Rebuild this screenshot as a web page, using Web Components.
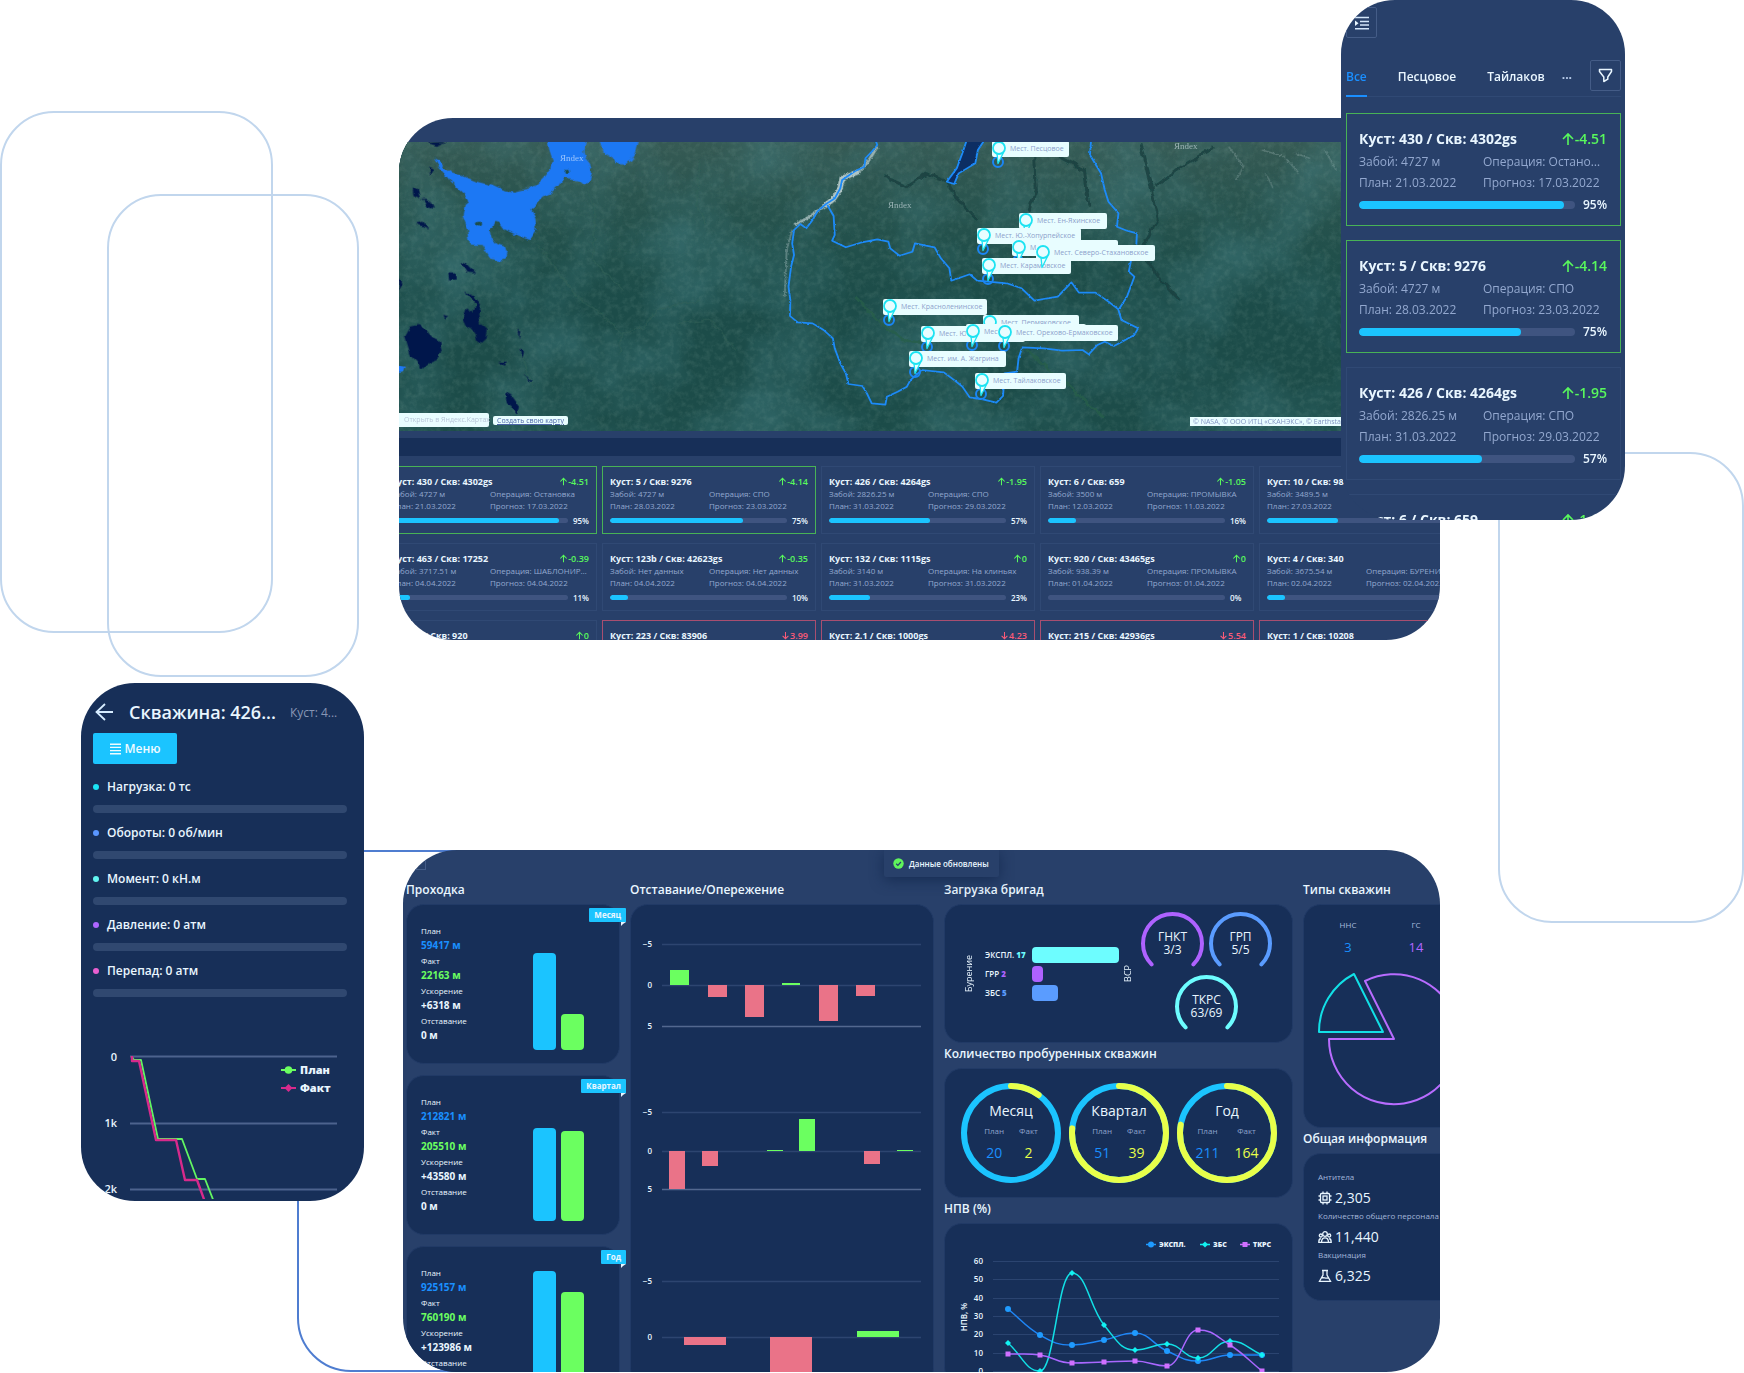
<!DOCTYPE html>
<html lang="ru">
<head>
<meta charset="utf-8">
<title>Мониторинг бурения</title>
<style>
  html { background: #fff; }
  body {
    margin: 0;
    font-family: "Open Sans", "Noto Sans", sans-serif;
    color: #e9f6ff;
    --panel: #28406a;
    --deep: #172f58;
    --line: #304974;
    --muted: #93a8cf;
    --cyan: #1bc4ff;
    --blue: #1a8fff;
    --green: #6bff60;
    --pink: #ea7388;
    --track: #3f5480;
  }
</style>
</head>
<body>
<app-collage></app-collage>

<script>
class Part extends HTMLElement {
  constructor() { super(); this.attachShadow({ mode: 'open' }); }
  connectedCallback() {
    this.shadowRoot.innerHTML = `<style>*{box-sizing:border-box}:host{display:block;box-sizing:border-box}${this.css()}</style>${this.html()}`;
  }
  css() { return ''; }
  html() { return ''; }
  a(name, fallback = '') { return this.getAttribute(name) ?? fallback; }
}
const define = (name, cls) => customElements.define(name, cls);

/* Well summary card, used in the wall grid and (size="large") in the phone list */
define('well-card', class extends Part {
  css() { return `
    :host { --t: 9px; --s: 8px; --th: 13px; --sh: 12px; --bh: 16px; --bar: 5px; --pct: 8px; --gap: 5px;
      height: 68px; padding: 8px 7px 0; border: 1px solid var(--line); overflow: hidden; }
    :host([size=large]) { --t: 14px; --s: 12px; --th: 24px; --sh: 21px; --bh: 23px; --bar: 8px; --pct: 12px; --gap: 8px;
      height: 113px; padding: 13px 13px 0 12px; }
    :host([state=good]) { border-color: #48b256; }
    :host([state=bad]) { border-color: #a84e70; }
    .head { display: flex; justify-content: space-between; font-size: var(--t); line-height: var(--th); font-weight: 700; white-space: nowrap; }
    .delta { display: flex; align-items: center; font-weight: 600; color: #58f85c; }
    .delta.down { color: #fb5a78; }
    .delta svg { width: 1em; height: 1em; }
    .facts { display: grid; grid-template-columns: 1fr 1fr; font-size: var(--s); line-height: var(--sh); color: var(--muted); }
    .facts span { overflow: hidden; text-overflow: ellipsis; white-space: nowrap; }
    .prog { display: flex; align-items: center; gap: var(--gap); height: var(--bh); font-size: var(--pct); font-weight: 600; }
    .track { flex: 1; height: var(--bar); border-radius: var(--bar); background: var(--track); overflow: hidden; }
    .fill { height: 100%; border-radius: var(--bar); background: var(--cyan); }
    .pct { min-width: 2em; white-space: nowrap; }`; }
  html() {
    const down = this.a('state') === 'bad', p = this.a('pct', '0');
    return `<div class="head"><span>${this.a('name')}</span><span class="delta ${down ? 'down' : ''}">
      <svg viewBox="0 0 14 14" fill="none" stroke="currentColor" stroke-width="1.6"><path d="${down ? 'M7 1.5V12M2.5 7.5 7 12l4.5-4.5' : 'M7 13V2.5M2 7l5-5 5 5'}"/></svg>${this.a('delta')}</span></div>
      <div class="facts"><span>Забой: ${this.a('depth')}</span><span>Операция: ${this.a('op')}</span>
      <span>План: ${this.a('plan')}</span><span>Прогноз: ${this.a('eta')}</span></div>
      <div class="prog"><div class="track"><div class="fill" style="width:${p}%"></div></div><span class="pct">${p}%</span></div>`;
  }
});

const wells = [
  ['Куст: 430 / Скв: 4302gs','-4.51','4727 м','Остановка','21.03.2022','17.03.2022',95,'good'],
  ['Куст: 5 / Скв: 9276','-4.14','4727 м','СПО','28.03.2022','23.03.2022',75,'good'],
  ['Куст: 426 / Скв: 4264gs','-1.95','2826.25 м','СПО','31.03.2022','29.03.2022',57,''],
  ['Куст: 6 / Скв: 659','-1.05','3500 м','ПРОМЫВКА','12.03.2022','11.03.2022',16,''],
  ['Куст: 10 / Скв: 981','-0.5','3489.5 м','СПО','27.03.2022','27.03.2022',40,''],
  ['Куст: 463 / Скв: 17252','-0.39','3717.51 м','ШАБЛОНИРОВАНИЕ','04.04.2022','04.04.2022',11,''],
  ['Куст: 123b / Скв: 42623gs','-0.35','Нет данных','Нет данных','04.04.2022','04.04.2022',10,''],
  ['Куст: 132 / Скв: 1115gs','0','3140 м','На клиньях','31.03.2022','31.03.2022',23,''],
  ['Куст: 920 / Скв: 43465gs','0','938.39 м','ПРОМЫВКА','01.04.2022','01.04.2022',0,''],
  ['Куст: 4 / Скв: 340','0','3675.54 м','БУРЕНИЕ','02.04.2022','02.04.2022',10,''],
  ['Куст: 6 / Скв: 920','0','','','','',0,''],
  ['Куст: 223 / Скв: 83906','3.99','','','','',0,'bad'],
  ['Куст: 2.1 / Скв: 1000gs','4.23','','','','',0,'bad'],
  ['Куст: 215 / Скв: 42936gs','5.54','','','','',0,'bad'],
  ['Куст: 1 / Скв: 10208','6','','','','',0,'bad']
];
const card = (w, size = '') => `<well-card ${size} name="${w[0]}" delta="${w[1]}" depth="${w[2]}" op="${w[3]}" plan="${w[4]}" eta="${w[5]}" pct="${w[6]}" state="${w[7]}"></well-card>`;

/* Pin with its label */
define('map-pin', class extends Part {
  css() { return `
    :host { position: absolute; height: 16px; border-radius: 2px; background: #e8fdff; color: #8c9fcb; font-size: 7px; line-height: 16px; padding-left: 18px; white-space: nowrap; }
    svg { position: absolute; left: 0; top: 0; width: 15px; height: 32px; overflow: visible; }`; }
  html() { return `<svg viewBox="0 0 15 32" fill="none"><path d="M5 12 6 22.500 11.500 11.500z" fill="#e8fdff" stroke="#1de3f2" stroke-width="1.300" stroke-linejoin="round"/>
    <circle cx="7" cy="7" r="6" fill="#e8fdff" stroke="#1de3f2" stroke-width="1.800"/></svg>${this.a('label')}`; }
});

define('field-map', class extends Part {
  css() { return `
    :host { position: relative; height: 289px; overflow: hidden; background: #1d4e4b; }
    .land { display: block; width: 100%; height: 100%; }
    .note { position: absolute; background: #e8fdff; color: #8396c2; font-size: 7px; white-space: nowrap; }
    .open { left: 0; bottom: 4px; width: 90px; line-height: 14px; padding-left: 5px; border-radius: 0 2px 2px 0; color: #b8c6d8; text-decoration: none; }
    .make { left: 94px; bottom: 6px; line-height: 9px; padding: 0 4px; border-radius: 2px; color: #4d66a8; }
    .copy { right: 94px; bottom: 5px; line-height: 9px; padding-left: 3px; width: 156px; overflow: hidden; }`; }
  html() {
    const pins = [
      [618,115,808,'Мест. Песцовое'],[692,330,910,'Мест. Ен-Яхинское'],[578,374,840,'Мест. Ю.-Хопурпейское'],
      [674,412,942,'Мест.'],[592,466,813,'Мест. Карамовское'],[738,425,1042,'Мест. Северо-Стахановское'],
      [324,588,587,'Мест. Красноленинское'],[594,636,836,'Мест. Пермяковское'],[428,670,690,'Мест. Ю.'],
      [549,662,855,'Мест.'],[634,667,942,'Мест. Орехово-Ермаковское'],
      [396,745,638,'Мест. им. А. Жагрина'],[572,809,800,'Мест. Тайлаковское']
    ].map(([x, y, r, t]) => {
      const l = Math.round(371 + x / 2.7034) - 7;
      return { x: l + 6, y: Math.round(y / 3 - 32) + 14, html: `<map-pin label="${t}" style="left:${l}px;top:${Math.round(y / 3 - 32) - 7}px;width:${Math.round(371 + r / 2.7034) - l}px"></map-pin>` };
    });
    return `<svg class="land" viewBox="0 0 1041 289" preserveAspectRatio="xMinYMin slice">
    <defs>
      <filter id="grain" x="0" y="0" width="100%" height="100%"><feTurbulence type="fractalNoise" baseFrequency=".16" numOctaves="5" seed="8"/><feColorMatrix values="0 0 0 0 .26  0 0 0 0 .42  0 0 0 0 .36  1.600 0 0 0 -.66"/></filter>
      <filter id="shade" x="0" y="0" width="100%" height="100%"><feTurbulence type="fractalNoise" baseFrequency=".012" numOctaves="5" seed="3"/><feColorMatrix values="0 0 0 0 .06  0 0 0 0 .22  0 0 0 0 .24  1.600 0 0 0 -.6"/></filter>
      <filter id="rough" x="-5%" y="-5%" width="110%" height="110%"><feTurbulence type="fractalNoise" baseFrequency=".12" numOctaves="2" seed="5"/><feDisplacementMap in="SourceGraphic" scale="6" xChannelSelector="R" yChannelSelector="G"/></filter>
      <filter id="soft" x="-20%" y="-20%" width="140%" height="140%"><feTurbulence type="fractalNoise" baseFrequency=".2" numOctaves="2" seed="2"/><feDisplacementMap in="SourceGraphic" scale="9" xChannelSelector="R" yChannelSelector="G"/><feGaussianBlur stdDeviation=".8"/></filter>
      <linearGradient id="north" x1="0" y1="0" x2="0" y2="1"><stop offset="0" stop-color="#3f5f58" stop-opacity=".75"/><stop offset=".55" stop-color="#2c5a50" stop-opacity="0"/></linearGradient>
    </defs>
    <rect width="1041" height="289" fill="#1c4c49"/>
    <rect width="1041" height="289" fill="url(#north)"/>
    <rect width="1041" height="289" filter="url(#shade)" opacity=".6" style="color-interpolation-filters:sRGB"/>
    <rect width="1041" height="289" filter="url(#grain)" opacity=".22"/>
    <g filter="url(#rough)">
    <g transform="translate(371 -32) scale(.3699 .33333)" fill="none" stroke="#17403f" stroke-width="8" opacity=".8">
      <path d="M310 200 370 230 420 190 480 215 500 260 560 330M715 130 720 240 700 300M780 140 850 180 862 290M1000 100 1030 230 1050 330 1000 420 1050 500 1110 570M1200 110 1100 180 1040 230"/>
      <path d="M690 720 780 800 900 920" stroke="#28604c"/><path d="M230 560 290 630 360 690 420 700" stroke="#28604c"/>
    </g>
    <g transform="translate(-9 -32) scale(.33333)">
      <path fill="none" stroke="#35645a" stroke-width="4" opacity=".6" d="M590 240 615 300 610 450 700 540M440 400 560 560 620 600 695 670 760 650 800 600 930 570M695 670 690 730M930 150 920 290 950 340M860 640 960 630 1040 720M390 720 430 830"/>
      <path fill="#1f78f4" d="M132 142 148 150 160 170 185 188 215 196 260 215 305 226 345 244 375 248 410 240 440 225 465 200 485 172 488 150 478 120 470 80H590L580 125 585 140 600 158 606 190 600 208 584 226 568 212 520 205 505 228 480 250 455 262 435 285 424 300 436 325 440 360 420 390 385 378 345 358 330 338 312 336 308 352 298 358 304 385 318 402 345 410 350 425 344 448 330 453 300 445 275 405 240 404 234 360 218 318 224 285 235 275 222 250 180 212 150 175zM630 80H750L738 125 725 150 700 164 678 162 664 140 640 125zM20 765 44 770 40 785 20 785z"/>
      <path fill="#00184b" d="M62 650 85 645 108 660 125 680 150 695 155 720 145 745 110 765 95 780 82 755 62 735 45 680zM222 545 250 555 270 580 265 610 270 640 293 660 290 685 270 704 260 690 255 665 228 650 218 630 230 598 250 610 258 580zM210 455 230 462 256 490 232 488zM175 490 195 490 198 508 178 512zM68 232 84 240 90 265 70 255zM98 265 120 272 132 296 114 292zM383 660 391 665 386 685zM390 715 402 725 398 743zM345 845 365 857 390 890 384 912 350 882zM400 790 426 814 420 815zM76 340 100 335 115 355zM115 170 130 176 120 195zM27 500 40 520 27 540zM160 615 174 618 165 626zM325 755 350 755 345 768zM110 98 170 96 140 108z"/>
      <ellipse cx="267" cy="342" rx="9" ry="7" fill="#1d4e4b"/><circle cx="533" cy="183" r="7" fill="#1d4e4b"/>
    </g></g>
    <g transform="translate(371 -32) scale(.3699 .33333)">
      <g filter="url(#soft)" fill="none" stroke="#dbe8ea">
        <path stroke-width="15" opacity=".75" d="M240 185 195 205 188 240 170 268 145 290"/><path stroke-width="8" opacity=".6" d="M290 110 262 160 240 185M145 290 100 325 65 345"/><path stroke-width="5" opacity=".3" d="M60 360 45 420 40 560"/>
        <path stroke-width="4" opacity=".22" d="M1240 110 1280 170 1260 210M1330 120 1390 140 1430 190M1420 130 1460 145M1340 190 1360 235M1500 120 1530 180"/>
      </g>
      <g filter="url(#rough)" fill="none" stroke="#1d8af8" stroke-width="5" stroke-linejoin="round">
        <path fill="#0b2e63" d="M532 90 520 130 505 175 478 215 498 222 510 190 555 160 562 120 580 90"/>
        <path d="M285 90 290 105 275 125 258 145 255 170 232 182 195 210 190 235 175 265 150 283 128 305 115 330 98 355 82 342 65 360 60 400 65 435 57 470 50 530 55 570 54 618 75 637 115 640 145 660 170 685 175 715 190 760 205 790 212 822 250 828 262 850 275 880 312 884 316 860 345 845 370 830 380 810 400 790 410 780 470 787 500 812 520 830 540 862 575 868 612 878 630 858 634 790 668 785 672 745 682 712 740 715 790 722 845 720 862 733 885 705 905 695 930 708 985 675 995 655 950 630 942 600 965 560 985 500 970 485 978 440 990 410 992 370 965 362 938 350 942 310 915 275 905 240 895 190 865 135 868 90"/>
        <path d="M155 285 172 318 175 375 168 392 205 412 245 398 290 388 320 395 325 415 350 437 385 425 392 400 445 412 462 445 485 475 490 512 540 493 560 512 640 520 680 535 715 572 778 560 815 517 835 548 880 548 915 575 942 598"/>
      </g>
    </g>
    <g fill="none" stroke="#1a86f5" stroke-width="2">${pins.map(p => `<circle cx="${p.x}" cy="${p.y}" r="5"/>`).join('')}</g>
    <g font-family="Liberation Serif, serif" font-size="9" fill="#b5c9cc" opacity=".8"><text x="161" y="19" fill="#bcd8ff">Яndex</text><text x="489" y="66">Яndex</text><text x="775" y="7">Яndex</text></g>
    </svg>${pins.map(p => p.html).join('')}
    <a class="note open" href="#open">Открыть в Яндекс.Картах</a><a class="note make" href="#make">Создать свою карту</a>
    <span class="note copy">© NASA, © ООО ИТЦ «СКАНЭКС», © Earthstar Geographics</span>`;
  }
});

define('map-panel', class extends Part {
  css() { return `
    :host { background: var(--panel); border-radius: 54px; overflow: hidden; padding-top: 24px; }
    .band { height: 18px; margin: 7px 0 10px; background: var(--deep); }
    .wall { display: grid; grid-template-columns: repeat(5, 214px); gap: 9px 5px; margin-left: -16px; }`; }
  html() { return `<field-map></field-map><div class="band"></div><div class="wall">${wells.map(w => card(w)).join('')}</div>`; }
});

define('list-panel', class extends Part {
  css() { return `
    :host { background: var(--panel); border-radius: 54px; overflow: hidden; padding: 7px 4px 0 5px; }
    button { font: inherit; color: inherit; background: none; border: 0; padding: 0; }
    .sq { width: 31px; height: 31px; border: 1px solid #445c87; border-radius: 2px; display: grid; place-items: center; }
    .bar { display: flex; align-items: center; margin-top: 22px; height: 37px; border-bottom: 1px solid #304974; margin-bottom: 16px; }
    .tab { font-size: 12px; font-weight: 600; line-height: 34px; height: 37px; margin-right: 31px; border-bottom: 2px solid transparent; }
    .tab.on { color: var(--blue); border-color: var(--blue); }
    .more { font-size: 12px; font-weight: 700; color: #b9cdeb; margin-left: -14px; line-height: 34px; height: 37px; }
    .bar .sq { margin: 0 0 6px auto; }
    .list { display: grid; gap: 14px; }`; }
  html() { return `
    <button class="sq" aria-label="Развернуть меню"><svg width="15" height="14" viewBox="0 0 15 14" fill="none" stroke="#d3e5fa" stroke-width="1.500"><path d="M1 1.500h14M6 5.500h9M6 9h9M1 12.700h14"/><path d="M1 4.500v5.500l3.500-2.800z" fill="#e9f6ff" stroke="none"/></svg></button>
    <div class="bar" role="tablist"><button class="tab on" role="tab" aria-selected="true">Все</button><button class="tab" role="tab">Песцовое</button><button class="tab" role="tab">Тайлаков</button><button class="more" aria-label="Ещё">···</button>
    <button class="sq" aria-label="Фильтр"><svg width="15" height="15" viewBox="0 0 15 15" fill="none" stroke="#e9f6ff" stroke-width="1.500" stroke-linejoin="round"><path d="M1.500 1.500h12v2L9.800 9v2.200L5.800 13.500V9L1.500 3.500z"/></svg></button></div>
    <div class="list">${wells.slice(0, 4).map(w => card(w, 'size="large"')).join('')}</div>`; }
});

define('well-gauge', class extends Part {
  css() { return `
    :host { height: 46px; }
    .l { display: flex; align-items: center; gap: 8px; font-size: 12px; font-weight: 600; line-height: 20px; }
    i { width: 6px; height: 6px; border-radius: 50%; background: var(--c); }
    .t { height: 8px; border-radius: 4px; background: #304870; margin-top: 8px; }`; }
  html() { return `<div class="l"><i></i>${this.a('label')}</div><div class="t"></div>`; }
});

define('well-panel', class extends Part {
  css() { return `
    :host { background: var(--deep); border-radius: 54px; overflow: hidden; padding: 14px 17px 0 12px; }
    header { display: flex; align-items: center; height: 30px; white-space: nowrap; }
    .back { background: none; border: 0; padding: 0 0 0 2px; line-height: 0; }
    h2 { margin: 0 0 0 16px; font-size: 18px; font-weight: 600; }
    .sub { margin-left: 14px; font-size: 12px; color: #8796b5; }
    .menu { display: flex; align-items: center; justify-content: center; gap: 4px; width: 84px; height: 31px; margin: 6px 0 13px; border: 0; border-radius: 2px; background: var(--cyan); color: #effbff; font: 600 12px "Open Sans", "Noto Sans", sans-serif; }
    svg { display: block; }
    .plot { margin: 32px 0 0 -12px; }`; }
  html() { return `
    <header><button class="back" aria-label="Назад"><svg width="18" height="18" viewBox="0 0 18 18" fill="none" stroke="#d6ecff" stroke-width="1.800"><path d="M18 9H1.500M10 1 1.500 9l8.500 8"/></svg></button><h2>Скважина: 426...</h2><span class="sub">Куст: 4...</span></header>
    <button class="menu"><svg width="11" height="12" viewBox="0 0 11 12" stroke="#effbff" stroke-width="1.400"><path d="M0 1.200h11M0 4.400h11M0 7.600h11M0 10.800h11"/></svg>Меню</button>
    ${[['Нагрузка: 0 тс','#1be3f5'],['Обороты: 0 об/мин','#5a96ff'],['Момент: 0 кН.м','#62f6f2'],['Давление: 0 атм','#ad66ff'],['Перепад: 0 атм','#e85fd0']].map(([t, c]) => `<well-gauge label="${t}" style="--c:${c}"></well-gauge>`).join('')}
    <svg class="plot" width="283" height="160" viewBox="0 0 283 160" fill="none" stroke-linejoin="round">
      <path d="M49 17.500h207M49 84.500h207M49 150.500h207" stroke="#4d638d" stroke-width="2"/>
      <path d="M51 18 53 21H60L77 100H101L116 140H124L133 163" stroke="#62f562" stroke-width="1.800"/>
      <path d="M51 17V22H58L75 101H95L104 141H116L124 163" stroke="#d72a8c" stroke-width="2.400"/>
      <g font-size="11" font-weight="600" fill="#e9f6ff" text-anchor="end"><text x="36" y="22">0</text><text x="36" y="88">1k</text><text x="36" y="154">2k</text></g>
      <path d="M200 31h15" stroke="#6bff60" stroke-width="2"/><circle cx="207.500" cy="31" r="3.800" fill="#6bff60"/>
      <path d="M200 49h15" stroke="#d72a8c" stroke-width="2"/><path d="m207.500 45 4 4-4 4-4-4z" fill="#d72a8c"/>
      <g font-size="11" font-weight="800" fill="#e9f6ff"><text x="219" y="35">План</text><text x="219" y="53">Факт</text></g>
    </svg>`; }
});

/* Titled dashboard section with slotted card(s) */
define('dash-section', class extends Part {
  css() { return `h3 { margin: 0; padding-bottom: 3px; font-size: 12px; line-height: 22px; font-weight: 600; white-space: nowrap; }`; }
  html() { return `<h3>${this.a('title')}</h3><slot></slot>`; }
});
define('dash-card', class extends Part {
  css() { return `:host { position: relative; background: var(--deep); border: 1px solid #213a66; border-radius: 18px; height: var(--h, auto); }`; }
  html() { return `<slot></slot>`; }
});

define('meter-card', class extends Part {
  css() { return `
    :host { position: relative; display: flex; justify-content: space-between; height: 160px; padding: 18px 35px 13px 14px; background: var(--deep); border: 1px solid #213a66; border-radius: 18px; }
    dl { margin: 0; font-size: 8px; line-height: 15px; white-space: nowrap; } dt, dd { margin: 0; }
    dd { font-size: 10px; font-weight: 700; } .p { color: var(--blue); } .f { color: var(--green); }
    .bars { display: flex; align-items: flex-end; gap: 5px; }
    .bars i { width: 23px; border-radius: 4px; background: var(--cyan); } .bars i + i { background: var(--green); }
    .tag { position: absolute; top: 3px; right: -7px; padding: 0 5px; font-size: 8px; line-height: 14px; font-weight: 700; background: var(--cyan); border-radius: 1px 1px 0 1px; }
    .tag::after { content: ""; position: absolute; right: 0; top: 14px; border: 2px solid transparent; border-top-color: #e9f6ff; border-left-color: #e9f6ff; border-right-width: 3px; }`; }
  html() { return `<dl><dt>План</dt><dd class="p">${this.a('plan')} м</dd><dt>Факт</dt><dd class="f">${this.a('fact')} м</dd><dt>Ускорение</dt><dd>+${this.a('up')} м</dd><dt>Отставание</dt><dd>0 м</dd></dl>
    <div class="bars"><i style="height:${this.a('b')}px"></i><i style="height:${this.a('g')}px"></i></div><span class="tag">${this.a('tag')}</span>`; }
});

define('lag-charts', class extends Part {
  css() { return `svg { display: block; }`; }
  html() {
    const set = [
      [[39, 80, 121], [[39,19,-15],[77,19,12],[114,19,32],[151,18,-2],[188,19,36],[225,19,11]]],
      [[207, 246, 284], [[38,16,38],[71,16,15],[136,16,-1],[168,16,-32],[233,16,13],[266,16,-1]]],
      [[376, 432, 489], [[53,42,8],[139,42,54],[226,42,-6]]]
    ];
    return `<svg width="302" height="480" viewBox="0 0 302 480">${set.map(([ys, bars]) =>
      ys.map((y, i) => `<path d="M31 ${y}.500h259" stroke="${i === 2 ? '#53688f' : '#2d4570'}" stroke-width="1.500"/><text x="21" y="${y + 3}" text-anchor="end" font-size="8" font-weight="600" fill="#e9f6ff">${['−5', '0', '5'][i]}</text>`).join('') +
      bars.map(([x, w, h]) => `<rect x="${x}" y="${Math.min(ys[1], ys[1] + h)}" width="${w}" height="${Math.abs(h)}" fill="${h < 0 ? '#6bff60' : '#ea7388'}"/>`).join('')).join('')}</svg>`;
  }
});

define('arc-gauge', class extends Part {
  css() { return `
    :host { position: relative; width: 63px; height: 63px; display: grid; place-items: center; text-align: center; font-size: 12px; line-height: 13px; }
    svg { position: absolute; inset: 0; } span { position: relative; }`; }
  html() { return `<svg viewBox="0 0 63 63" fill="none"><path d="M10.600 52.400a29.500 29.500 0 1 1 41.800 0" stroke="${this.a('color')}" stroke-width="4" stroke-linecap="round"/></svg><span>${this.a('name')}<br>${this.a('value')}</span>`; }
});

define('crew-load', class extends Part {
  css() { return `
    :host { display: flex; align-items: center; height: 100%; padding-left: 18px; font-size: 9px; }
    .v { writing-mode: vertical-rl; transform: rotate(180deg); line-height: 12px; }
    .rows { display: grid; gap: 3px; margin: 0 3px 0 10px; }
    .r { display: grid; grid-template-columns: 47px 87px; height: 16px; line-height: 16px; font-size: 8px; font-weight: 600; white-space: nowrap; }
    .r b { color: var(--c); } .r i { width: var(--w); background: var(--c); border-radius: 4px; }
    .arcs { display: grid; grid-template-columns: 63px 63px; column-gap: 5px; margin: 2px 0 0 7px; }
    .arcs > :last-child { grid-column: span 2; justify-self: center; }`; }
  html() { return `<span class="v">Бурение</span><div class="rows">
    <div class="r" style="--c:#6dfdff;--w:87px"><span>ЭКСПЛ. <b>17</b></span><i></i></div>
    <div class="r" style="--c:#ae62ff;--w:11px"><span>ГРР <b>2</b></span><i></i></div>
    <div class="r" style="--c:#5a9cff;--w:26px"><span>ЗБС <b>5</b></span><i></i></div></div><span class="v">ВСР</span>
    <div class="arcs"><arc-gauge name="ГНКТ" value="3/3" color="#ae62ff"></arc-gauge><arc-gauge name="ГРП" value="5/5" color="#5a9cff"></arc-gauge><arc-gauge name="ТКРС" value="63/69" color="#6dfdff"></arc-gauge></div>`; }
});

define('ring-stat', class extends Part {
  css() { return `
    :host { position: relative; width: 100px; height: 100px; text-align: center; padding-top: 18px; }
    svg { position: absolute; inset: 0; } .in { position: relative; }
    .n { font-size: 14px; line-height: 20px; }
    .c { display: flex; justify-content: center; gap: var(--g, 15px); font-size: 8px; line-height: 20px; color: #8ea3cc; }
    .c b { display: block; font-size: 14px; line-height: 24px; font-weight: 400; color: var(--blue); } .c span + span b { color: #e8ff4a; }`; }
  html() {
    const f = this.a('fact') / this.a('plan'), c = 2 * Math.PI * 47;
    return `<svg viewBox="0 0 100 100" fill="none" stroke-width="6"><circle cx="50" cy="50" r="47" stroke="#1bc4ff"/><circle cx="50" cy="50" r="47" stroke="#e8ff4a" stroke-linecap="round" stroke-dasharray="${c * f} ${c}" transform="rotate(-90 50 50)"/></svg>
    <div class="in"><div class="n">${this.a('name')}</div><div class="c"><span>План<b>${this.a('plan')}</b></span><span>Факт<b>${this.a('fact')}</b></span></div></div>`;
  }
});

define('npv-chart', class extends Part {
  css() { return `svg { display: block; }`; }
  html() {
    const xs = [63, 95, 127, 159, 190, 222, 253, 285, 317];
    const data = [
      ['#1f86f7', [85,111,121,116,109,127,137,131,131], 'c'],
      ['#12e0e6', [119,147,49,101,126,120,134,117,131], 'd'],
      ['#a967ff', [130,131,139,138,137,142,106,121,147], 's']
    ];
    const spline = ys => {
      const m = ys.map((y, i) => (i === 0 || i === ys.length - 1) ? 0 : ((ys[i + 1] - y) * (y - ys[i - 1]) <= 0 ? 0 : (ys[i + 1] - ys[i - 1]) / (xs[i + 1] - xs[i - 1])));
      m[0] = (ys[1] - ys[0]) / (xs[1] - xs[0]); m[8] = (ys[8] - ys[7]) / (xs[8] - xs[7]);
      let d = `M${xs[0]} ${ys[0]}`;
      for (let i = 1; i < ys.length; i++) { const h = (xs[i] - xs[i - 1]) * .45; d += `C${xs[i - 1] + h} ${ys[i - 1] + m[i - 1] * h} ${xs[i] - h} ${ys[i] - m[i] * h} ${xs[i]} ${ys[i]}`; }
      return d;
    };
    const mark = (k, x, y, c) => k === 'c' ? `<circle cx="${x}" cy="${y}" r="3" fill="${c}"/>` : k === 'd' ? `<path d="m${x} ${y - 3} 3 3-3 3-3-3z" fill="${c}"/>` : `<rect x="${x - 2.5}" y="${y - 2.5}" width="5" height="5" fill="${c}"/>`;
    const mc = ['#1f9bff', '#12f2f2', '#d070ff'];
    return `<svg width="347" height="160" viewBox="0 0 347 160" fill="none">
      ${[0,1,2,3,4,5,6].map(i => { const y = Math.round(37 + i * 18.3); return `<path d="M48 ${y}.500h286" stroke="#2b4470"/><text x="38" y="${y + 3}" text-anchor="end" font-size="8" font-weight="600" fill="#e9f6ff">${60 - i * 10}</text>`; }).join('')}
      <text transform="translate(22 93) rotate(-90)" text-anchor="middle" font-size="8" font-weight="600" fill="#e9f6ff">НПВ, %</text>
      ${data.map(([c, ys, k], i) => `<path d="${spline(ys)}" stroke="${c}" stroke-width="1.500"/>` + ys.map((y, j) => mark(k, xs[j], y, mc[i])).join('')).join('')}
      ${[[201,'ЭКСПЛ.'],[255,'ЗБС'],[295,'ТКРС']].map(([x, t], i) => `<path d="M${x} 20.500h10" stroke="${mc[i]}" stroke-width="1.500"/>${mark(data[i][2], x + 5, 20.5, mc[i])}<text x="${x + 13}" y="23" font-size="7" font-weight="800" fill="#e9f6ff">${t}</text>`).join('')}</svg>`;
  }
});

define('type-pie', class extends Part {
  css() { return `
    .k { display: grid; grid-template-columns: 68px 68px; padding-top: 11px; margin-left: 10px; text-align: center; font-size: 8px; line-height: 18px; color: #a9bddf; }
    b { display: block; font-size: 13px; line-height: 26px; font-weight: 400; color: var(--blue); } span + span b { color: #b266ff; }
    svg { display: block; margin-top: 12px; }`; }
  html() { return `<div class="k"><span>ННС<b>3</b></span><span>ГС<b>14</b></span></div>
    <svg width="170" height="140" viewBox="0 0 170 140" fill="none" stroke-width="2" stroke-linejoin="round"><path d="M79 60 50 2A65 65 0 0 0 15 60z" stroke="#12e0e6"/><path d="M90 67 61 9A65 65 0 1 1 25 67z" stroke="#b86cff"/></svg>`; }
});

define('info-row', class extends Part {
  css() { return `
    .l { font-size: 8px; line-height: 12px; color: #a3b6da; white-space: nowrap; margin-bottom: 3px; }
    .v { display: flex; align-items: center; gap: 3px; font-size: 14px; line-height: 24px; } svg { display: block; }`; }
  html() {
    const icons = {
      chip: '<rect x="2.500" y="2.500" width="9" height="9" rx="1"/><rect x="5" y="5" width="4" height="4"/><path d="M5 .5v2M9 .5v2M5 11.500v2M9 11.500v2M.5 5h2M.5 9h2M11.500 5h2M11.500 9h2"/>',
      team: '<circle cx="7" cy="4" r="2.300"/><circle cx="2.800" cy="5.500" r="1.500"/><circle cx="11.200" cy="5.500" r="1.500"/><path d="M3.500 12.300c0-2.800 1.500-4.500 3.500-4.500s3.500 1.700 3.500 4.500zM3.500 12.300H.8c0-2 .5-3.500 2-3.800M10.500 12.300h2.700c0-2-.5-3.500-2-3.800"/>',
      flask: '<path d="M4 1.500h6M5 1.500V6L1.500 12.300h11L9 6V1.500M3.300 9c2.200-1 4.500 1 7.200-.2"/>'
    };
    return `<div class="l">${this.a('label')}</div><div class="v"><svg width="14" height="14" viewBox="0 0 14 14" fill="none" stroke="#e9f6ff" stroke-width="1.300">${icons[this.a('icon')]}</svg>${this.a('value')}</div>`;
  }
});

define('dash-panel', class extends Part {
  css() { return `
    :host { position: relative; background: var(--panel); border-radius: 54px; overflow: hidden; }
    .top { height: 29px; } .top button { display: block; width: 23px; height: 20px; padding: 0; background: none; border: 1px solid #445c87; }
    .toast { position: absolute; left: 481px; top: 0; display: flex; align-items: center; gap: 5px; height: 27px; padding: 0 10px 0 9px; background: var(--panel); border-radius: 0 0 2px 2px; box-shadow: 0 3px 14px #0d2248aa; font-size: 8px; font-weight: 600; white-space: nowrap; }
    .grid { display: grid; grid-template-columns: 214px 304px 349px 214px; gap: 10px; padding-left: 3px; }
    .stack { display: grid; gap: 11px; }
    .rings { display: flex; gap: 8px; padding: 14px 0 0 16px; }
    .info { padding: 17px 0 0 14px; }`; }
  html() { return `
    <div class="top"><button aria-label="Меню"></button></div>
    <div class="grid">
      <dash-section title="Проходка"><div class="stack">
        <meter-card tag="Месяц" plan="59417" fact="22163" up="6318" b="97" g="36"></meter-card>
        <meter-card tag="Квартал" plan="212821" fact="205510" up="43580" b="93" g="90"></meter-card>
        <meter-card tag="Год" plan="925157" fact="760190" up="123986" b="121" g="100"></meter-card></div></dash-section>
      <dash-section title="Отставание/Опережение"><dash-card><lag-charts></lag-charts></dash-card></dash-section>
      <div>
        <dash-section title="Загрузка бригад"><dash-card style="--h:139px"><crew-load></crew-load></dash-card></dash-section>
        <dash-section title="Количество пробуренных скважин"><dash-card style="--h:130px"><div class="rings"><ring-stat name="Месяц" plan="20" fact="2"></ring-stat><ring-stat name="Квартал" plan="51" fact="39"></ring-stat><ring-stat name="Год" plan="211" fact="164"></ring-stat></div></dash-card></dash-section>
        <dash-section title="НПВ (%)"><dash-card><npv-chart></npv-chart></dash-card></dash-section>
      </div>
      <div>
        <dash-section title="Типы скважин"><dash-card style="--h:224px"><type-pie></type-pie></dash-card></dash-section>
        <dash-section title="Общая информация"><dash-card style="--h:148px"><div class="info"><info-row label="Антитела" value="2,305" icon="chip"></info-row><info-row label="Количество общего персонала" value="11,440" icon="team"></info-row><info-row label="Вакцинация" value="6,325" icon="flask"></info-row></div></dash-card></dash-section>
      </div>
    </div>
    <div class="toast" role="status"><svg width="11" height="11" viewBox="0 0 11 11"><circle cx="5.500" cy="5.500" r="5.200" fill="#5ff45c"/><path d="m3.200 5.700 1.700 1.700 3-3.400" fill="none" stroke="#28406a" stroke-width="1.300"/></svg>Данные обновлены</div>`; }
});

/* Overlapping arrangement of the panels and the rounded outline frames */
define('app-collage', class extends Part {
  css() { return `
    :host { display: grid; overflow: hidden;
      grid-template-columns:
        [f1] 81fr [well] 26fr [f2] 166fr [f1e] 24fr [f4] 62fr [f2e] 5fr [welle] 35fr [map] 4fr [dash] 897fr [f4e] 41fr [list] 99fr [wide-e] 58fr [f3] 127fr [liste] 119fr [end];
      grid-template-rows:
        [top] 111px [f1] 7px [map] 76px [f2] 258px [f3] 68px [liste] 113px [f1e] 7px [mape] 37px [f2e] 6px [well] 167px [dash] 73px [f3e] 278px [welle] 171px [dashe]; }
    i { border: 2px solid #c1d6ed; border-radius: 54px; }
    .a { grid-area: f1 / f1 / f1e / f1e; } .b { grid-area: f2 / f2 / f2e / f2e; }
    .c { grid-area: f3 / f3 / f3e / end; } .d { grid-area: dash / f4 / dashe / f4e; border-color: #4f7dd0; }
    map-panel, list-panel, well-panel, dash-panel { min-width: 0; min-height: 0; isolation: isolate; }
    map-panel { grid-area: map / map / mape / wide-e; }
    list-panel { grid-area: top / list / liste / liste; }
    well-panel { grid-area: well / well / welle / welle; }
    dash-panel { grid-area: dash / dash / dashe / wide-e; }`; }
  html() { return `<i class="a"></i><i class="b"></i><i class="c"></i><i class="d"></i>
    <map-panel></map-panel><list-panel></list-panel><dash-panel></dash-panel><well-panel></well-panel>`; }
});
</script>
</body>
</html>
